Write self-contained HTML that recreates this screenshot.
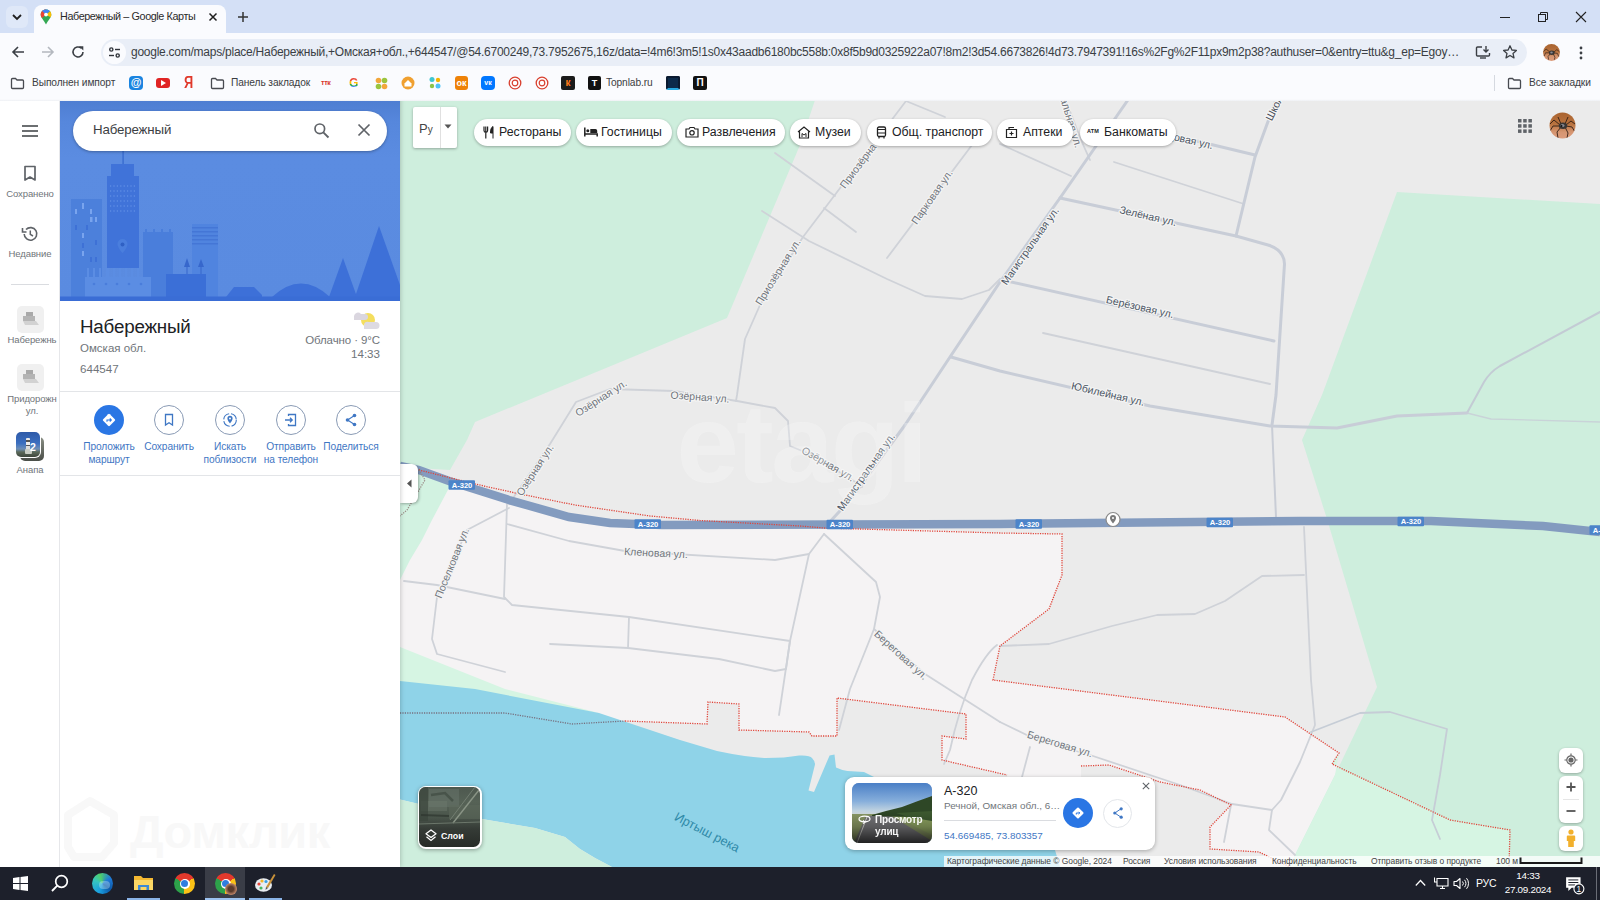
<!DOCTYPE html>
<html><head><meta charset="utf-8">
<style>
*{box-sizing:border-box;margin:0;padding:0}
html,body{width:1600px;height:900px;overflow:hidden;background:#fff;font-family:"Liberation Sans",sans-serif;}
body{position:relative}
.abs{position:absolute}
#tabstrip{left:0;top:0;width:1600px;height:34px;background:#d4e0f6}
#tab{left:34px;top:5px;width:192px;height:29px;background:#fafbfe;border-radius:8px 8px 0 0}
#toolbar{left:0;top:33px;width:1600px;height:37px;background:#fafbfe}
#urlbar{left:101px;top:39px;width:1426px;height:27px;border-radius:14px;background:#e9eef7}
#bmbar{left:0;top:70px;width:1600px;height:27px;background:#fafbfe}
#bmext{left:0;top:97px;width:1600px;height:3.500px;background:linear-gradient(180deg,#fafbfe 0 55%,#eef0f4 100%);z-index:9}
.t{position:absolute;white-space:nowrap;color:#3c4043}
#rail{left:0;top:97px;width:60px;height:770px;background:#fff;border-right:1px solid #e6e7ea}
#panel{left:60px;top:97px;width:340px;height:770px;background:#fff;box-shadow:0 0 5px rgba(0,0,0,.25);clip-path:inset(3px -10px 0 0)}
#hero{left:60px;top:97px;width:340px;height:203.500px;background:#5a8be0;overflow:hidden}
#search{left:73px;top:111px;width:314px;height:40px;border-radius:20px;background:#fff;box-shadow:0 1px 3px rgba(0,0,0,.3)}
#map{left:400px;top:97px;width:1200px;height:770px;overflow:hidden;background:#ebebeb}
#taskbar{left:0;top:867px;width:1600px;height:33px;background:#1d202b}
.chip{position:absolute;top:119px;height:27px;border-radius:14px;background:#fff;box-shadow:0 1px 3px rgba(0,0,0,.3);font-size:13px;color:#202124;line-height:27px;white-space:nowrap}
.ctl{position:absolute;background:#fff;border-radius:6px;box-shadow:0 1px 3px rgba(0,0,0,.3)}
</style></head><body>
<!-- CHROME -->
<div id="tabstrip" class="abs"></div>
<div id="tab" class="abs"></div>
<div id="toolbar" class="abs"></div>
<div id="urlbar" class="abs"></div>
<div id="bmbar" class="abs"></div>
<!--CHROME-ITEMS_S--><!-- tab search chevron -->
<div class="abs" style="left:6px;top:6px;width:22px;height:22px;border-radius:6px;background:#dfe8f8"></div>
<svg class="abs" style="left:11px;top:12px" width="12" height="10" viewBox="0 0 12 10"><path d="M2,3 L6,7 L10,3" fill="none" stroke="#1f1f1f" stroke-width="1.8"/></svg>
<!-- favicon maps pin -->
<svg class="abs" style="left:40px;top:9px" width="12" height="16" viewBox="0 0 12 16"><path d="M6,0.5 C2.8,0.5 0.7,2.9 0.7,5.7 C0.7,8.5 3.4,10.6 6,15.5 C8.6,10.6 11.3,8.5 11.3,5.7 C11.3,2.9 9.2,0.5 6,0.5 Z" fill="#34a853"/><path d="M6,0.5 C2.8,0.5 0.7,2.9 0.7,5.7 C0.7,6.9 1.2,8 2,9 L6,5.5 Z" fill="#ea4335"/><path d="M6,0.5 C7.6,0.5 9,1.1 10,2.2 L6,5.7 L2.2,2 C3.1,1 4.5,0.5 6,0.5Z" fill="#4285f4"/><path d="M10,2.2 C10.8,3.1 11.3,4.3 11.3,5.7 C11.3,6.6 11,7.4 10.6,8.2 L6,5.7Z" fill="#fbbc04"/><circle cx="6" cy="5.6" r="1.9" fill="#fff"/></svg>
<div class="t" style="left:60px;top:10px;font-size:10.8px;color:#2a2a2a;letter-spacing:-.4px">Набережный – Google Карты</div>
<svg class="abs" style="left:208px;top:12px" width="10" height="10" viewBox="0 0 10 10"><path d="M1.5,1.5 L8.5,8.5 M8.5,1.5 L1.5,8.5" stroke="#1f1f1f" stroke-width="1.5"/></svg>
<svg class="abs" style="left:237px;top:11px" width="12" height="12" viewBox="0 0 12 12"><path d="M6,1 V11 M1,6 H11" stroke="#333" stroke-width="1.5"/></svg>
<!-- window controls -->
<svg class="abs" style="left:1499px;top:11px" width="12" height="12" viewBox="0 0 12 12"><path d="M1,6.5 H11" stroke="#222" stroke-width="1"/></svg>
<svg class="abs" style="left:1537px;top:11px" width="12" height="12" viewBox="0 0 12 12"><rect x="1.5" y="3.5" width="7" height="7" fill="none" stroke="#222" stroke-width="1"/><path d="M3.5,3.5 V1.5 H10.5 V8.5 H8.5" fill="none" stroke="#222" stroke-width="1"/></svg>
<svg class="abs" style="left:1575px;top:11px" width="12" height="12" viewBox="0 0 12 12"><path d="M1,1 L11,11 M11,1 L1,11" stroke="#222" stroke-width="1.1"/></svg>
<!-- nav buttons -->
<svg class="abs" style="left:11px;top:45px" width="14" height="14" viewBox="0 0 14 14"><path d="M13,7 H2 M7,2 L2,7 L7,12" fill="none" stroke="#3b3f45" stroke-width="1.6"/></svg>
<svg class="abs" style="left:41px;top:45px" width="14" height="14" viewBox="0 0 14 14"><path d="M1,7 H12 M7,2 L12,7 L7,12" fill="none" stroke="#b4b8bf" stroke-width="1.6"/></svg>
<svg class="abs" style="left:71px;top:45px" width="14" height="14" viewBox="0 0 14 14"><path d="M12,7 A5,5 0 1 1 10.3,3.2" fill="none" stroke="#3b3f45" stroke-width="1.6"/><path d="M8,1.2 H12.3 V5.5 Z" fill="#3b3f45"/></svg>
<!-- site info -->
<div class="abs" style="left:103px;top:41px;width:23px;height:23px;border-radius:12px;background:#fafbfe"></div>
<svg class="abs" style="left:108px;top:46px" width="13" height="13" viewBox="0 0 13 13"><g fill="none" stroke="#30343a" stroke-width="1.4"><circle cx="3.3" cy="3.5" r="1.6"/><path d="M7,3.5 H12"/><circle cx="9.7" cy="9.5" r="1.6"/><path d="M1,9.5 H6"/></g></svg>
<div class="t" style="left:131px;top:45px;font-size:12px;color:#3a3e44;letter-spacing:-.25px" id="url">google.com/maps/place/Набережный,+Омская+обл.,+644547/@54.6700249,73.7952675,16z/data=!4m6!3m5!1s0x43aadb6180bc558b:0x8f5b9d0325922a07!8m2!3d54.6673826!4d73.7947391!16s%2Fg%2F11px9m2p38?authuser=0&amp;entry=ttu&amp;g_ep=Egoy…</div>
<!-- install / star -->
<svg class="abs" style="left:1475px;top:44px" width="16" height="16" viewBox="0 0 16 16"><path d="M7,3 H2.5 A1,1 0 0 0 1.5,4 V11 A1,1 0 0 0 2.5,12 H13.500 A1,1 0 0 0 14.5,11 V9" fill="none" stroke="#3b3f45" stroke-width="1.4"/><path d="M5,14 H11" stroke="#3b3f45" stroke-width="1.4"/><path d="M11,2 V8 M8.500,5.500 L11,8 L13.500,5.500" fill="none" stroke="#3b3f45" stroke-width="1.4"/></svg>
<svg class="abs" style="left:1502px;top:44px" width="16" height="16" viewBox="0 0 16 16"><path d="M8,1.8 L9.9,6 L14.400,6.400 L11,9.400 L12,13.900 L8,11.500 L4,13.900 L5,9.400 L1.600,6.400 L6.100,6 Z" fill="none" stroke="#3b3f45" stroke-width="1.3" stroke-linejoin="round"/></svg>
<!-- profile avatar -->
<svg class="abs" style="left:1543px;top:44px" width="17" height="17" viewBox="0 0 27 27"><defs><linearGradient id="avg2" x1="0" y1="0" x2="0" y2="1"><stop offset="0" stop-color="#a9632f"/><stop offset=".45" stop-color="#b9733f"/><stop offset=".75" stop-color="#d69672"/><stop offset="1" stop-color="#dc9c7c"/></linearGradient></defs><circle cx="13.500" cy="13.500" r="13.500" fill="url(#avg2)"/><g stroke="#2a1a12" stroke-width="1.300" fill="none" opacity=".8"><path d="M11,13 L5,8 L1,12"/><path d="M11,14 L4,14 L2,19"/><path d="M12,15 L8,20 L9,25"/><path d="M16,15 L19,21 L18,25"/><path d="M17,14 L23,15 L25,20"/><path d="M17,13 L22,9 L26,12"/></g><ellipse cx="14" cy="13.800" rx="4.500" ry="3.500" fill="#3a3634"/><ellipse cx="13.500" cy="13.500" rx="2" ry="1.500" fill="#8a8a92"/></svg>
<svg class="abs" style="left:1578px;top:45px" width="6" height="16" viewBox="0 0 6 16"><circle cx="3" cy="3" r="1.4" fill="#3b3f45"/><circle cx="3" cy="8" r="1.4" fill="#3b3f45"/><circle cx="3" cy="13" r="1.4" fill="#3b3f45"/></svg>
<!-- bookmarks -->
<svg class="abs" style="left:10px;top:77px" width="15" height="13" viewBox="0 0 15 13"><path d="M1.500,2.500 A1,1 0 0 1 2.500,1.500 H5.500 L7,3 H12.500 A1,1 0 0 1 13.500,4 V10.500 A1,1 0 0 1 12.500,11.500 H2.500 A1,1 0 0 1 1.500,10.500 Z" fill="none" stroke="#474a50" stroke-width="1.3"/></svg>
<div class="t" style="left:32px;top:77px;font-size:10.2px;color:#3a3d42;letter-spacing:-.1px">Выполнен импорт</div>
<div class="abs" style="left:129px;top:76px;width:14px;height:14px;border-radius:4px;background:#1a84e0;color:#fff;font-size:11px;line-height:13px;text-align:center;font-weight:bold">@</div>
<div class="abs" style="left:156px;top:78px;width:14px;height:10px;border-radius:3px;background:#e02424"></div>
<svg class="abs" style="left:161px;top:80px" width="5" height="6" viewBox="0 0 5 6"><path d="M0,0 L5,3 L0,6Z" fill="#fff"/></svg>
<div class="t" style="left:184px;top:74px;font-size:16px;color:#e0392b;font-weight:bold;transform:scaleX(.8);transform-origin:0 0">Я</div>
<svg class="abs" style="left:210px;top:77px" width="15" height="13" viewBox="0 0 15 13"><path d="M1.500,2.500 A1,1 0 0 1 2.500,1.500 H5.500 L7,3 H12.500 A1,1 0 0 1 13.500,4 V10.500 A1,1 0 0 1 12.500,11.500 H2.500 A1,1 0 0 1 1.500,10.500 Z" fill="none" stroke="#474a50" stroke-width="1.3"/></svg>
<div class="t" style="left:231px;top:77px;font-size:10.2px;color:#3a3d42;letter-spacing:-.1px">Панель закладок</div>
<div class="t" style="left:321px;top:79px;font-size:7px;color:#d9362b;font-weight:bold;letter-spacing:-.3px">ттк</div>
<div class="t" style="left:349px;top:76px;font-size:12px;font-weight:bold;background:linear-gradient(180deg,#ea4335 0 35%,#fbbc04 35% 55%,#34a853 55% 75%,#4285f4 75%);-webkit-background-clip:text;color:transparent">G</div>
<svg class="abs" style="left:375px;top:77px" width="13" height="13" viewBox="0 0 13 13"><circle cx="3.5" cy="3.5" r="2.8" fill="#f2a73b"/><circle cx="9.500" cy="3.500" r="2.8" fill="#9bc53d"/><circle cx="3.500" cy="9.500" r="2.8" fill="#9bc53d"/><circle cx="9.500" cy="9.500" r="2.8" fill="#f2a73b"/></svg>
<svg class="abs" style="left:401px;top:76px" width="14" height="14" viewBox="0 0 14 14"><circle cx="7" cy="7" r="6.5" fill="#f0a030"/><path d="M3.5,7.500 L7,4 L10.500,7.500 V10.500 H3.500Z" fill="#fff"/></svg>
<svg class="abs" style="left:428px;top:76px" width="14" height="14" viewBox="0 0 14 14"><circle cx="4" cy="3.500" r="2.500" fill="#3ec6d0"/><circle cx="10" cy="4" r="2.200" fill="#f4b400"/><circle cx="4" cy="10" r="2.200" fill="#8bc34a"/><circle cx="10" cy="10" r="2.500" fill="#4fc3f7"/></svg>
<div class="abs" style="left:455px;top:76px;width:13px;height:14px;border-radius:3px;background:#ee8208;color:#fff;font-size:9px;line-height:14px;text-align:center;font-weight:bold">ок</div>
<div class="abs" style="left:481px;top:76px;width:14px;height:14px;border-radius:4px;background:#0077ff;color:#fff;font-size:7px;line-height:14px;text-align:center;font-weight:bold">vк</div>
<svg class="abs" style="left:508px;top:76px" width="14" height="14" viewBox="0 0 14 14"><circle cx="7" cy="7" r="5.800" fill="#fff" stroke="#d8402f" stroke-width="1.300"/><circle cx="7" cy="7" r="2.800" fill="none" stroke="#d8402f" stroke-width="1.200"/></svg>
<svg class="abs" style="left:535px;top:76px" width="14" height="14" viewBox="0 0 14 14"><circle cx="7" cy="7" r="5.800" fill="#fff" stroke="#d8402f" stroke-width="1.300"/><circle cx="7" cy="7" r="2.800" fill="none" stroke="#d8402f" stroke-width="1.200"/></svg>
<div class="abs" style="left:561px;top:76px;width:14px;height:14px;border-radius:2px;background:#1b1b1b;color:#ff7a1a;font-size:10px;line-height:14px;text-align:center;font-weight:bold">к</div>
<div class="abs" style="left:588px;top:76px;width:13px;height:14px;border-radius:2px;background:#111;color:#fff;font-size:9px;line-height:14px;text-align:center;font-weight:bold">Т</div>
<div class="t" style="left:606px;top:77px;font-size:10.2px;color:#3a3d42;letter-spacing:-.1px">Topnlab.ru</div>
<div class="abs" style="left:666px;top:76px;width:14px;height:14px;border-radius:2px;background:#0c2a4a;border:2px solid #0a1a30;border-bottom-color:#27a9e1"></div>
<div class="abs" style="left:693px;top:76px;width:14px;height:14px;border-radius:2px;background:#111;color:#fff;font-size:10px;line-height:14px;text-align:center;font-weight:bold">П</div>
<div class="abs" style="left:1494px;top:75px;width:1px;height:16px;background:#d5d9e0"></div>
<svg class="abs" style="left:1507px;top:77px" width="15" height="13" viewBox="0 0 15 13"><path d="M1.500,2.500 A1,1 0 0 1 2.500,1.500 H5.500 L7,3 H12.500 A1,1 0 0 1 13.500,4 V10.500 A1,1 0 0 1 12.500,11.500 H2.500 A1,1 0 0 1 1.500,10.500 Z" fill="none" stroke="#474a50" stroke-width="1.300"/></svg>
<div class="t" style="left:1529px;top:77px;font-size:10.2px;color:#3a3d42;letter-spacing:-.1px">Все закладки</div>
<!--CHROME-ITEMS_E-->
<!-- MAP -->
<div id="map" class="abs">
<!--MAPSVG_S--><svg width="1200" height="770" viewBox="400 97 1200 770" style="position:absolute;left:0;top:0">
<rect x="400" y="97" width="1200" height="770" fill="#ebebeb"/>
<!-- selected (lighter) region -->
<path id="sel" d="M400,468 L419,470 L449,481 L509,499 L569,515 L610,520 L662,521 L830,526 L1000,533 L1062,534 L1062,575 L1049,609 L1000,646 L993,680 L1285,717 L1339,753 L1332,764 L1450,820 L1510,830 L1509,867 L400,867 Z" fill="#f5f3f4"/>
<!-- gray cutouts (outside selection, below) -->
<path d="M400,713 L505,713 L572,724 L625,721 L707,724 L708,702 L739,704 L739,730 L809,732 L812,736 L837,736 L837,698 L966,714 L966,739 L942,736 L942,760 L1007,775 L1010,800 L1081,800 L1081,766 L1109,765 L1160,782 L1200,790 L1231,805 L1210,827 L1210,849 L1259,852 L1290,867 L400,867 Z" fill="#ebebeb"/>
<!-- green areas -->
<path d="M400,97 L816,97 L800,145 L727,318 L577,380 L475,422 L467,440 L450,470 L400,467 Z" fill="#ceeedd"/>
<path d="M400,465 L447,478 L450,486 L432,520 L422,540 L410,560 L400,580 Z" fill="#d2f2e1"/>
<path d="M1397,192 L1600,204 L1600,867 L1290,867 L1295,855 L1335,775 L1377,687 L1327,519 L1302,440 L1322,395 Z" fill="#ceeedd"/>
<path d="M1339,753 L1332,764 L1450,820 L1510,830 L1509,867 L1290,867 L1295,855 L1335,775 Z" fill="#d6f5e3"/>
<path d="M400,647 L505,689 L599,713 L400,690 Z" fill="#d6f5e3"/>
<!-- water -->
<path d="M400,681 L475,689 L599,713 L662,734 L680,740 L717,751 Q745,757 766,758 Q785,758 799,755.5 Q810,755 812,758 Q815,761 815,764.5 L808.5,790.4 L814,792 L829.6,755.4 L834.5,754.6 L836,767.6 Q842,770.500 847.5,771 L864,772 L900,790 L1055,850 L1060,867 L612,867 L595,858 L580,849 L565,837 L535,828 L482,819 L400,799.5 Z" fill="#8fd3e8"/>
<path d="M400,799.5 L482,819 L535,828 L565,837 L580,849 L595,858 L612,867 L400,867 Z" fill="#ceeedd"/>
<!-- roads minor -->
<g fill="none" stroke="#cfd2d8" stroke-width="1.8" stroke-linecap="round" stroke-linejoin="round">
<path d="M906,101 L803,237 L760,305 L745,339 L737,395 L736,401"/>
<path d="M775,153 L835,196"/><path d="M824,208 L856,232"/>
<path d="M762,211 L809,241 L887,279 L925,296 L962,299 L989,290 L1000,279"/>
<path d="M972,145 L887,258"/>
<path d="M906,101 L945,117"/>
<path d="M1066,101 L1081,140 L1090,160"/>
<path d="M1000,144 L1071,176"/>
<path d="M1114,162 L1244,204"/>
<path d="M1043,333 L1270,384"/>
<path d="M1600,312 L1500,366 Q1490,372 1484,382 L1467,413" stroke="#c3cbd4" stroke-width="2"/>
<path d="M1467,413 L1491,419 L1600,422" stroke="#c9d3d8" stroke-width="1.300"/>
<path d="M1304,527 L1311,680 L1315,725 L1300,762 L1281,800 L1272,810 L1269,830 L1295,855"/>
<path d="M1304,575 L1262,576 L1225,601 L1195,614 L1157,615 L1112,626 L1049,644 L1000,646"/>
<path d="M1311,732 L1360,713 L1390,712 L1447,729 L1440,775 L1432,820 L1440,839" stroke="#c6cdd6"/>
<path d="M1000,722 L1037,740 L1090,755 L1180,785 L1232,804 L1272,810"/>
<path d="M1030,747 L1022,777"/><path d="M1231,805 L1224,842"/>
<path d="M509,504 L550,444 L576,402 L610,389 L674,391 L737,401 L775,408 L788,421 L790,446 L812,455 L854,481 L862,487"/>
<path d="M509,508 L467,530 L437,597 L432,639 L437,654 L505,672"/>
<path d="M507,504 L504,597 L512,605 L629,617 L790,641"/>
<path d="M507,524 L569,541 L625,551 L775,560 L809,554 L824,534"/>
<path d="M404,581 L437,585 L505,599"/>
<path d="M629,617 L628,648"/>
<path d="M550,644 L628,648 L719,659 L775,671 L786,669 L790,641 L809,554"/>
<path d="M824,534 L876,582 L880,597 L874,629 L850,689 L839,730"/>
<path d="M874,629 L925,674 L1000,722"/>
<path d="M790,641 L779,715"/>
<path d="M997,645 Q986,653 972,680 Q958,712 950,750 L944,764"/>
</g>
<!-- roads major -->
<g fill="none" stroke="#c8cdd7" stroke-width="3" stroke-linecap="round" stroke-linejoin="round">
<path d="M1130,97 L1060,198 L1000,282 L950,357 L905,425 L850,500 L826,526"/>
<path d="M1060,198 L1236,236 L1268,245 Q1284,250 1284.500,264 L1276,395 L1272,425"/>
<path d="M1277,97 L1255,157 L1236,236"/>
<path d="M1176,136 L1255,155"/>
<path d="M1007,281 L1274,341"/>
<path d="M951,357 L1000,371 L1150,406 L1270,426 L1337,428 L1397,416 L1467,413"/>
</g>
<g fill="none" stroke="#c9cdd6" stroke-width="2" stroke-linecap="round"><path d="M1272,425 L1276,517"/></g>
<!-- highway -->
<path d="M400,466 L419,470 L449,481 L509,500 L569,517 L610,523 L662,525 L1000,524 L1300,521 L1431,521 L1543,526 L1600,532" fill="none" stroke="#839bbf" stroke-width="8.5"/>
<!-- dotted boundary -->
<g fill="none" stroke="#e0453a" stroke-width="1.3" stroke-dasharray="1.2 1.2">
<path d="M400,466 L419,470 L475,484 L520,494 L575,505 L650,516 L700,520.5 L800,526 L824,528 L1000,533 L1062,534 L1062,575 L1049,609 L1000,646 L993,680 L1285,717 L1339,753 L1332,764 L1450,820 L1510,830 L1509,867"/>
<path d="M400,713 L505,713 L572,724 L625,721" stroke="#77707f"/><path d="M625,721 L707,724 L708,702 L739,704 L739,730 L809,732 L812,736 L837,736 L837,698 L966,714 L966,739 L942,736 L942,760 L1007,775"/>
<path d="M1081,766 L1109,765 L1160,782 L1200,790 L1231,805 L1210,827 L1210,849 L1259,852 L1290,867"/>
<path d="M419,470 L425,480 L407,510 L400,516" stroke="#9a8a86"/>
</g>
<!--LBL_S--><g font-family="Liberation Sans, sans-serif" font-size="10.5" text-anchor="middle" stroke-linejoin="round">
<text transform="translate(858,166) rotate(-53)" y="3.6" fill="#70757c" stroke="#f4f4f4" stroke-width="2.4" paint-order="stroke">Приозёрна</text>
<text transform="translate(778,272) rotate(-58)" y="3.6" fill="#70757c" stroke="#f4f4f4" stroke-width="2.4" paint-order="stroke">Приозёрная ул.</text>
<text transform="translate(932,197) rotate(-55)" y="3.6" fill="#70757c" stroke="#f4f4f4" stroke-width="2.4" paint-order="stroke">Парковая ул.</text>
<text transform="translate(1030,246) rotate(-55)" y="3.6" fill="#4e5866" stroke="#f4f4f4" stroke-width="2.4" paint-order="stroke">Магистральная ул.</text>
<text transform="translate(866,472) rotate(-55)" y="3.6" fill="#4e5866" stroke="#f4f4f4" stroke-width="2.4" paint-order="stroke">Магистральная ул.</text>
<text transform="translate(1068,112) rotate(73)" y="3.6" fill="#70757c" stroke="#f4f4f4" stroke-width="2.4" paint-order="stroke">Вокзальная ул.</text>
<text transform="translate(1268.5,120) rotate(-64)" text-anchor="start" y="3.6" fill="#444b55" stroke="#f4f4f4" stroke-width="2.4" paint-order="stroke">Школьная ул.</text>
<text transform="translate(1184,139) rotate(13)" y="3.6" fill="#4e5866" stroke="#f4f4f4" stroke-width="2.4" paint-order="stroke">Садовая ул.</text>
<text transform="translate(1148,216) rotate(13)" y="3.6" fill="#4e5866" stroke="#f4f4f4" stroke-width="2.4" paint-order="stroke">Зелёная ул.</text>
<text transform="translate(1140,307) rotate(13)" y="3.6" fill="#4e5866" stroke="#f4f4f4" stroke-width="2.4" paint-order="stroke">Берёзовая ул.</text>
<text transform="translate(1108,394) rotate(13)" y="3.6" fill="#4e5866" stroke="#f4f4f4" stroke-width="2.4" paint-order="stroke">Юбилейная ул.</text>
<text transform="translate(601,398) rotate(-33)" y="3.6" fill="#70757c" stroke="#f4f4f4" stroke-width="2.4" paint-order="stroke">Озёрная ул.</text>
<text transform="translate(700,397) rotate(4)" y="3.6" fill="#70757c" stroke="#f4f4f4" stroke-width="2.4" paint-order="stroke">Озёрная ул.</text>
<text transform="translate(828,464) rotate(30)" y="3.6" fill="#70757c" stroke="#f4f4f4" stroke-width="2.4" paint-order="stroke">Озёрная ул.</text>
<text transform="translate(535,470) rotate(-57)" y="3.6" fill="#70757c" stroke="#f4f4f4" stroke-width="2.4" paint-order="stroke">Озёрная ул.</text>
<text transform="translate(656,553) rotate(3)" y="3.6" fill="#70757c" stroke="#f4f4f4" stroke-width="2.4" paint-order="stroke">Кленовая ул.</text>
<text transform="translate(452,563) rotate(-68)" y="3.6" fill="#70757c" stroke="#f4f4f4" stroke-width="2.4" paint-order="stroke">Поселковая ул.</text>
<text transform="translate(901,655) rotate(42)" y="3.6" fill="#70757c" stroke="#f4f4f4" stroke-width="2.4" paint-order="stroke">Береговая ул.</text>
<text transform="translate(1060,744) rotate(17)" y="3.6" fill="#70757c" stroke="#f4f4f4" stroke-width="2.4" paint-order="stroke">Береговая ул.</text>
<text transform="translate(707,832.500) rotate(27.500)" y="4" font-size="12.700" fill="#2f8aa8">Иртыш река</text>
</g>
<g font-family="Liberation Sans, sans-serif" font-size="7.6" font-weight="bold" text-anchor="middle">
<rect x="448.5" y="480.3" width="26.5" height="9.4" rx="1" fill="#4c84c9"/><text x="462" y="487.9" fill="#fff">A-320</text>
<rect x="634.5" y="519.3" width="26.5" height="9.4" rx="1" fill="#4c84c9"/><text x="648" y="526.9" fill="#fff">A-320</text>
<rect x="826.5" y="519.8" width="26.5" height="9.4" rx="1" fill="#4c84c9"/><text x="840" y="527.4" fill="#fff">A-320</text>
<rect x="1015.5" y="519.3" width="26.5" height="9.4" rx="1" fill="#4c84c9"/><text x="1029" y="526.9" fill="#fff">A-320</text>
<rect x="1206.5" y="517.8" width="26.5" height="9.4" rx="1" fill="#4c84c9"/><text x="1220" y="525.4" fill="#fff">A-320</text>
<rect x="1397.5" y="516.8" width="26.5" height="9.4" rx="1" fill="#4c84c9"/><text x="1411" y="524.4" fill="#fff">A-320</text>
<rect x="1589.5" y="525.3" width="26.5" height="9.4" rx="1" fill="#4c84c9"/><text x="1603" y="532.9" fill="#fff">A-320</text>
</g>
<circle cx="1113" cy="519.5" r="7" fill="#fff" stroke="#8a8a8a" stroke-width="1.2"/><path d="M1113,515 a3,3 0 0 1 3,3 c0,2.300 -3,5.500 -3,5.500 c0,0 -3,-3.200 -3,-5.500 a3,3 0 0 1 3,-3z" fill="#7a7a7a"/><circle cx="1113" cy="518" r="1" fill="#fff"/>
<text x="801" y="482" font-family="Liberation Sans, sans-serif" font-weight="bold" font-size="112" text-anchor="middle" fill="#fff" opacity=".24" letter-spacing="-2.5">etagi</text><!--LBL_E-->
</svg>
<!--MAPSVG_E-->
</div>
<!--MAP-OVERLAYS_S--><!-- language switch -->
<div class="abs" style="left:413px;top:107px;width:44px;height:41px;background:#fff;border-radius:2px;box-shadow:0 1px 3px rgba(0,0,0,.3)"></div>
<div class="abs" style="left:440px;top:107px;width:1px;height:41px;background:#e0e0e0"></div>
<div class="t" style="left:419px;top:121px;font-size:13px;color:#444">Р<span style="font-size:10px">у</span></div>
<svg class="abs" style="left:444px;top:124px" width="8" height="5" viewBox="0 0 8 5"><path d="M0.500,0.500 H7.500 L4,4.500Z" fill="#555"/></svg>
<!-- chips -->
<div class="chip" style="left:474px;width:97px"><svg class="abs" style="left:9px;top:7px" width="12" height="13" viewBox="0 0 12 13"><path d="M1,0.500 V4.500 A1.800,1.800 0 0 0 4.600,4.500 V0.500 M2.800,0.500 V12.500" fill="none" stroke="#222" stroke-width="1.200"/><path d="M10,12.500 V0.500 C8,1.500 7.500,4 7.500,7 H10" fill="#222" stroke="#222" stroke-width="1"/></svg><span style="position:absolute;left:25px;font-size:12.300px">Рестораны</span></div>
<div class="chip" style="left:576px;width:96px"><svg class="abs" style="left:8px;top:8px" width="14" height="10" viewBox="0 0 14 10"><path d="M0.800,0.500 V9.500 M0.800,7 H13.200 V9.500" fill="none" stroke="#222" stroke-width="1.500"/><circle cx="3.800" cy="3.800" r="1.500" fill="#222"/><path d="M6.300,2 H11.500 A1.700,1.700 0 0 1 13.200,3.700 V6 H6.300Z" fill="#222"/></svg><span style="position:absolute;left:25px;font-size:12.300px">Гостиницы</span></div>
<div class="chip" style="left:677px;width:108px"><svg class="abs" style="left:8px;top:7px" width="14" height="12" viewBox="0 0 14 12"><path d="M1,3 H4 L5,1.500 H9 L10,3 H13 V11 H1Z" fill="none" stroke="#222" stroke-width="1.200"/><circle cx="7" cy="6.800" r="2.200" fill="none" stroke="#222" stroke-width="1.200"/></svg><span style="position:absolute;left:25px;font-size:12.300px">Развлечения</span></div>
<div class="chip" style="left:790px;width:71px"><svg class="abs" style="left:7px;top:7px" width="14" height="13" viewBox="0 0 14 13"><path d="M1,6 L7,1 L13,6 M2.500,5.500 V12 H11.500 V5.500" fill="none" stroke="#222" stroke-width="1.200"/><path d="M5,11 V7.500 L7,9 L9,7.500 V11" fill="none" stroke="#222" stroke-width="1"/></svg><span style="position:absolute;left:25px;font-size:12.300px">Музеи</span></div>
<div class="chip" style="left:867px;width:125px"><svg class="abs" style="left:9px;top:7px" width="11" height="13" viewBox="0 0 11 13"><rect x="1.500" y="1" width="8" height="9.500" rx="1.500" fill="none" stroke="#222" stroke-width="1.300"/><path d="M1.500,3.500 H9.500 M1.500,7 H9.500 M3,10.500 V12.500 M8,10.500 V12.500" stroke="#222" stroke-width="1.200"/></svg><span style="position:absolute;left:25px;font-size:12.300px">Общ. транспорт</span></div>
<div class="chip" style="left:997px;width:76px"><svg class="abs" style="left:8px;top:7px" width="13" height="13" viewBox="0 0 13 13"><path d="M1.500,3.500 H11.500 V11.500 H1.500Z M4,3.500 V1.500 H9" fill="none" stroke="#222" stroke-width="1.200"/><path d="M6.500,5.500 V9.500 M4.500,7.500 H8.500" stroke="#222" stroke-width="1.200"/></svg><span style="position:absolute;left:26px;font-size:12.300px">Аптеки</span></div>
<div class="chip" style="left:1080px;width:96px"><span style="position:absolute;left:7px;top:-1px;font-size:5.500px;font-weight:bold;letter-spacing:.2px">ATM</span><span style="position:absolute;left:24px;font-size:12.300px">Банкоматы</span></div>
<!-- apps grid + avatar -->
<svg class="abs" style="left:1518px;top:119px" width="14" height="14" viewBox="0 0 14 14"><g fill="#5f6368"><rect x="0" y="0" width="3.500" height="3.500"/><rect x="5.200" y="0" width="3.500" height="3.500"/><rect x="10.400" y="0" width="3.500" height="3.500"/><rect x="0" y="5.200" width="3.500" height="3.500"/><rect x="5.200" y="5.200" width="3.500" height="3.500"/><rect x="10.400" y="5.200" width="3.500" height="3.500"/><rect x="0" y="10.400" width="3.500" height="3.500"/><rect x="5.200" y="10.400" width="3.500" height="3.500"/><rect x="10.400" y="10.400" width="3.500" height="3.500"/></g></svg>
<svg class="abs" style="left:1549px;top:112px" width="27" height="27" viewBox="0 0 27 27"><defs><linearGradient id="avg" x1="0" y1="0" x2="0" y2="1"><stop offset="0" stop-color="#a9632f"/><stop offset=".45" stop-color="#b9733f"/><stop offset=".75" stop-color="#d69672"/><stop offset="1" stop-color="#dc9c7c"/></linearGradient><clipPath id="avc"><circle cx="13.5" cy="13.5" r="13"/></clipPath></defs><g clip-path="url(#avc)"><rect width="27" height="27" fill="url(#avg)"/><g stroke="#2a1a12" stroke-width="1" fill="none" opacity=".85"><path d="M11,13 L5,8 L1,12"/><path d="M11,14 L4,14 L1,19"/><path d="M12,15 L8,20 L9,26"/><path d="M16,15 L19,21 L18,26"/><path d="M17,14 L23,15 L26,20"/><path d="M17,13 L22,9 L26,12"/><path d="M12,12 L9,5"/><path d="M16,12 L19,5"/></g><ellipse cx="14" cy="13.800" rx="4.200" ry="3.200" fill="#3a3634"/><ellipse cx="13.500" cy="13.500" rx="2" ry="1.500" fill="#8a8a92"/><circle cx="12.500" cy="14" r="1" fill="#111"/></g></svg>
<!-- collapse toggle -->
<div class="abs" style="left:400px;top:464px;width:18px;height:39px;background:#fff;border-radius:0 6px 6px 0;box-shadow:1px 1px 3px rgba(0,0,0,.3)"></div>
<svg class="abs" style="left:406px;top:479px" width="6" height="9" viewBox="0 0 6 9"><path d="M5.500,0.500 V8.500 L1,4.500Z" fill="#555"/></svg>
<!-- layers -->
<div class="abs" style="left:417.5px;top:785.5px;width:64px;height:63px;border-radius:8px;background:#fff;box-shadow:0 1px 4px rgba(0,0,0,.35)"></div>
<div class="abs" style="left:419px;top:787px;width:61px;height:60px;border-radius:6.5px;background:linear-gradient(180deg,#4d584f 0%,#566256 25%,#4a554b 50%,#353b36 70%,#272b27 100%);overflow:hidden">
<svg width="61" height="60" viewBox="0 0 61 60" style="position:absolute;left:0;top:0"><rect x="10" y="2" width="30" height="18" fill="#66736a" opacity=".55"/><rect x="2" y="14" width="26" height="10" fill="#707d70" opacity=".4"/><rect x="0" y="0" width="9" height="34" fill="#3a443c" opacity=".7"/><rect x="30" y="18" width="31" height="14" fill="#5e6a5c" opacity=".5"/><path d="M60,3 L34,36" stroke="#8a9486" stroke-width="1.400"/><path d="M56,0 L31,33" stroke="#7a8578" stroke-width=".8"/><path d="M0,37 L61,35" stroke="#6b766a" stroke-width="1.200"/><path d="M2,28 L30,29" stroke="#2e362f" stroke-width="2" opacity=".7"/><path d="M12,8 L26,6 L34,14" stroke="#3a463c" stroke-width="2.500" fill="none" opacity=".6"/></svg></div>
<svg class="abs" style="left:425px;top:829px" width="12" height="13" viewBox="0 0 12 13"><path d="M6,1 L11,4.800 L6,8.600 L1,4.800Z" fill="none" stroke="#fff" stroke-width="1.300" stroke-linejoin="round"/><path d="M1.500,7.800 L6,11.400 L10.500,7.800" fill="none" stroke="#fff" stroke-width="1.300"/></svg>
<div class="t" style="left:441px;top:830.5px;font-size:8.8px;color:#fff;font-weight:bold">Слои</div>
<!-- bottom card -->
<div class="abs" style="left:845px;top:777px;width:310px;height:73px;border-radius:9px;background:#fff;box-shadow:0 1px 4px rgba(0,0,0,.3)"></div>
<div class="abs" style="left:852px;top:783px;width:80px;height:60px;border-radius:7px;overflow:hidden;background:#6a8fc8">
<svg width="80" height="60" viewBox="0 0 80 60" style="position:absolute;left:0;top:0"><defs><linearGradient id="svsky" x1="0" y1="0" x2="0" y2="1"><stop offset="0" stop-color="#4a7fc6"/><stop offset=".55" stop-color="#86aedb"/><stop offset="1" stop-color="#dfe6e2"/></linearGradient><linearGradient id="svdk" x1="0" y1="0" x2="0" y2="1"><stop offset="0" stop-color="#000" stop-opacity="0"/><stop offset=".5" stop-color="#000" stop-opacity=".25"/><stop offset="1" stop-color="#000" stop-opacity=".72"/></linearGradient></defs>
<rect width="80" height="33" fill="url(#svsky)"/>
<rect y="31" width="80" height="29" fill="#8b9a66"/>
<path d="M14,33 L38,32 L80,58 V60 H2Z" fill="#77777a"/>
<path d="M40,32 L80,32 V52 Z" fill="#8fa562"/>
<path d="M20,32 L34,28 L50,24 L66,18 L80,13 V36 L60,34 L20,33Z" fill="#2e4726"/>
<path d="M44,30 L80,28 V38 L56,34Z" fill="#3d5a30"/>
<path d="M15,34 L5,60" stroke="#e8e8e0" stroke-width=".9"/>
<rect y="28" width="80" height="32" fill="url(#svdk)"/></svg></div>
<svg class="abs" style="left:857.5px;top:814.5px" width="13" height="10" viewBox="0 0 13 10"><ellipse cx="6.500" cy="4" rx="5.500" ry="2.800" fill="none" stroke="#fff" stroke-width="1.200"/><path d="M5,5.500 L7,7 L5,8.500" fill="none" stroke="#fff" stroke-width="1.200"/></svg>
<div class="t" style="left:875px;top:813.5px;font-size:10px;line-height:12.5px;color:#fff;font-weight:bold;letter-spacing:-.2px;opacity:.95">Просмотр<br>улиц</div>
<div class="t" style="left:944px;top:784px;font-size:12.500px;color:#202124">A-320</div>
<div class="t" style="left:944px;top:800px;font-size:9.9px;color:#70757a">Речной, Омская обл., 6…</div>
<div class="abs" style="left:944px;top:820px;width:112px;height:1px;background:#dadce0"></div>
<div class="t" style="left:944px;top:830px;font-size:9.9px;color:#3f77c4">54.669485, 73.803357</div>
<div class="abs" style="left:1063px;top:798px;width:30px;height:30px;border-radius:15px;background:#2a76e4"></div>
<svg class="abs" style="left:1071px;top:806px" width="14" height="14" viewBox="0 0 14 14"><rect x="2.800" y="2.800" width="8.400" height="8.400" rx="1" transform="rotate(45 7 7)" fill="#fff"/><path d="M5.300,8.500 V7 H8.500 M7.600,5.800 L8.800,7 L7.600,8.200" fill="none" stroke="#2a76e4" stroke-width="1"/></svg>
<div class="abs" style="left:1103px;top:799px;width:29px;height:29px;border-radius:15px;background:#fff;border:1px solid #e3e6ea"></div>
<svg class="abs" style="left:1111px;top:806px" width="14" height="14" viewBox="0 0 14 14"><path d="M10,2.800 L3.800,7 L10,11.200" fill="none" stroke="#3f77c4" stroke-width="1"/><circle cx="10.200" cy="2.800" r="1.600" fill="#3f77c4"/><circle cx="3.800" cy="7" r="1.600" fill="#3f77c4"/><circle cx="10.200" cy="11.200" r="1.600" fill="#3f77c4"/></svg>
<svg class="abs" style="left:1142px;top:782px" width="8" height="8" viewBox="0 0 8 8"><path d="M0.800,0.800 L7.200,7.200 M7.200,0.800 L0.800,7.200" stroke="#5f6368" stroke-width="1.100"/></svg>
<!-- attribution -->
<div class="abs" style="left:944px;top:856px;width:656px;height:11px;background:rgba(255,255,255,.75)"></div>
<div class="t attr" style="left:947px">Картографические данные © Google, 2024</div>
<div class="t attr" style="left:1123px">Россия</div>
<div class="t attr" style="left:1164px">Условия использования</div>
<div class="t attr" style="left:1272px">Конфиденциальность</div>
<div class="t attr" style="left:1371px">Отправить отзыв о продукте</div>
<div class="t attr" style="left:1496px">100 м</div>
<svg class="abs" style="left:1519px;top:856px" width="64" height="9" viewBox="0 0 64 9"><path d="M1.500,1.500 V7 H62.500 V1.500" fill="none" stroke="#1a1a1a" stroke-width="2"/></svg>
<style>.attr{top:856px;font-size:8.45px;color:#444;line-height:11px;letter-spacing:-.05px}</style>
<!-- right controls -->
<div class="ctl" style="left:1559px;top:748px;width:24px;height:25px"></div>
<svg class="abs" style="left:1564px;top:753px" width="14" height="14" viewBox="0 0 14 14"><circle cx="7" cy="7" r="4.200" fill="none" stroke="#666" stroke-width="1.200"/><circle cx="7" cy="7" r="2.600" fill="#666"/><path d="M7,0.500 V2.800 M7,11.200 V13.500 M0.500,7 H2.800 M11.200,7 H13.500" stroke="#666" stroke-width="1.200"/></svg>
<div class="ctl" style="left:1559px;top:776px;width:24px;height:47px"></div>
<div class="abs" style="left:1563px;top:799px;width:16px;height:1px;background:#e6e6e6"></div>
<svg class="abs" style="left:1566px;top:782px" width="10" height="10" viewBox="0 0 10 10"><path d="M5,0.500 V9.500 M0.500,5 H9.500" stroke="#555" stroke-width="1.800"/></svg>
<svg class="abs" style="left:1566px;top:806px" width="10" height="10" viewBox="0 0 10 10"><path d="M0.500,5 H9.500" stroke="#555" stroke-width="1.800"/></svg>
<div class="ctl" style="left:1559px;top:826px;width:24px;height:25px"></div>
<svg class="abs" style="left:1566px;top:829px" width="10" height="19" viewBox="0 0 10 19"><circle cx="5" cy="3" r="2.600" fill="#f2b02c"/><path d="M1.800,6.500 H8.200 A1,1 0 0 1 9.200,7.500 V12 H7.800 V18 H2.200 V12 H0.800 V7.500 A1,1 0 0 1 1.800,6.500Z" fill="#f2b02c"/></svg>
<!--MAP-OVERLAYS_E-->
<!-- PANEL -->
<div id="panel" class="abs"></div>
<div id="hero" class="abs"><!--HERO_S--><svg width="340" height="204" viewBox="60 97 340 204" style="position:absolute;left:0;top:0">
<defs><linearGradient id="sky" x1="0" y1="0" x2="0" y2="1"><stop offset="0" stop-color="#4d7cd0"/><stop offset=".12" stop-color="#5687dc"/><stop offset=".3" stop-color="#5b8ce1"/><stop offset="1" stop-color="#5a8be0"/></linearGradient></defs>
<rect x="60" y="97" width="340" height="204" fill="url(#sky)"/>
<!-- left building -->
<rect x="71" y="199" width="31" height="98" fill="#4c80db"/>
<g fill="#79a4ee"><rect x="75" y="209" width="2" height="5"/><rect x="82" y="203" width="2" height="6"/><rect x="90" y="209" width="2" height="5"/><rect x="90" y="217" width="2.500" height="5"/><rect x="95" y="217" width="2" height="5"/><rect x="82" y="233" width="2" height="5"/><rect x="82" y="251" width="2" height="5"/></g>
<g fill="#3e71d6"><rect x="75" y="225" width="2" height="5"/><rect x="86" y="225" width="2" height="5"/><rect x="95" y="240" width="2" height="5"/><rect x="82" y="243" width="2" height="5"/><rect x="90" y="257" width="2" height="5"/><rect x="95" y="257" width="2" height="5"/></g>
<!-- castle mid -->
<path d="M143,232 h2 v-3 h2 v3 h6 v-3 h2 v3 h6 v-3 h2 v3 h6 v-3 h2 v3 h2 v65 h-30z" fill="#4a7edb"/>
<!-- striped building -->
<rect x="192" y="224" width="26" height="73" fill="#5084df"/>
<g fill="#4476d6"><rect x="192" y="227" width="26" height="1.500"/><rect x="192" y="231" width="26" height="1.500"/><rect x="192" y="235" width="26" height="1.500"/><rect x="192" y="239" width="26" height="1.500"/><rect x="192" y="243" width="26" height="1.500"/></g>
<!-- tall tower -->
<rect x="122.300" y="151" width="1.600" height="14" fill="#3c6fd2"/>
<rect x="111" y="164" width="23" height="14" fill="#4073d9"/>
<rect x="107" y="176" width="32" height="92" fill="#4073d9"/>
<g fill="#6b98ea"><path d="M110,186 h26 M110,191 h26 M110,196 h26 M110,201 h26 M110,206 h26 M110,211 h26" stroke="#6b98ea" stroke-width="1.200" stroke-dasharray="1.200 2.200" fill="none"/></g>
<path d="M122.500,239 a5,5 0 0 1 5,5 c0,4 -5,9 -5,9 c0,0 -5,-5 -5,-9 a5,5 0 0 1 5,-5z" fill="#4a7edd"/><circle cx="122.500" cy="244.500" r="2" fill="#2f60c4"/>
<!-- castle wall light -->
<path d="M85,277 h2 v-9 h2 v9 h4 v-9 h2 v9 h4 v-9 h2 v9 h5 v-9 h3 v9 h4 v-9 h2 v9 h4 v-9 h2 v9 h4 v-9 h2 v9 h4 v-9 h2 v9 h4 v-9 h2 v9 h12 v20 h-66z" fill="#5b8de3"/>
<g fill="#4a7ddb"><circle cx="94" cy="284" r="1.300"/><circle cx="106" cy="284" r="1.300"/><circle cx="117" cy="284" r="1.300"/><circle cx="129" cy="284" r="1.300"/><circle cx="141" cy="284" r="1.300"/></g>
<!-- low dark building -->
<rect x="166" y="274" width="40" height="23" fill="#3b6fd7"/>
<path d="M187,258 l3,9 h-6z M201,259 l3,8 h-6z" fill="#3767cc"/><rect x="186.500" y="266" width="1" height="8" fill="#3767cc"/><rect x="200.500" y="266" width="1" height="8" fill="#3767cc"/>
<!-- car -->
<path d="M226,297 l8,-10 h20 l8,8 v2z" fill="#3d70d8"/>
<!-- hill -->
<path d="M272,297 q29,-27 58,0z" fill="#3d70d8"/>
<!-- mountains -->
<path d="M329,297 L343,258 L357,297Z" fill="#3d70d8"/>
<path d="M355,297 L379,226 L400,285 V297Z" fill="#3d70d8"/>
<rect x="60" y="296.500" width="340" height="4.500" fill="#3a6dd5"/>
</svg>
<!--HERO_E--></div>
<div id="search" class="abs"></div>
<!--PANEL-ITEMS_S--><div class="t" style="left:93px;top:122px;font-size:13.3px;color:#3c4043;letter-spacing:-.15px">Набережный</div>
<svg class="abs" style="left:313px;top:122px" width="17" height="17" viewBox="0 0 17 17"><circle cx="6.800" cy="6.800" r="4.800" fill="none" stroke="#5f6368" stroke-width="1.700"/><path d="M10.300,10.300 L15.500,15.500" stroke="#5f6368" stroke-width="1.900"/></svg>
<svg class="abs" style="left:357px;top:123px" width="14" height="14" viewBox="0 0 14 14"><path d="M1.500,1.500 L12.500,12.500 M12.500,1.500 L1.500,12.500" stroke="#5f6368" stroke-width="1.700"/></svg>
<div class="t" style="left:80px;top:315.5px;font-size:18.8px;color:#202124;letter-spacing:-.2px">Набережный</div>
<div class="t" style="left:80px;top:341.5px;font-size:11.5px;color:#70757a">Омская обл.</div>
<div class="t" style="left:80px;top:361.5px;font-size:11.6px;color:#70757a">644547</div>
<!-- weather icon -->
<svg class="abs" style="left:352px;top:310px" width="28" height="22" viewBox="0 0 28 22"><circle cx="16" cy="10" r="7" fill="#f4de5e"/><path d="M2,10 H13 A3,3 0 0 0 13,4 H9 A4,4 0 0 0 2,6 Z" fill="#dad6df"/><path d="M12,19 H24 A3.500,3.500 0 0 0 24,12 H17 A4,4 0 0 0 12,14 Z" fill="#dddae2"/></svg>
<div class="t" style="right:1220px;top:333.5px;font-size:11.5px;color:#70757a;letter-spacing:-.1px">Облачно · 9°C</div>
<div class="t" style="right:1220px;top:347px;font-size:11.6px;color:#70757a">14:33</div>
<div class="abs" style="left:60px;top:391px;width:340px;height:1px;background:#e3e5e8"></div>
<div class="abs" style="left:60px;top:475px;width:340px;height:1px;background:#e3e5e8"></div>
<!-- action buttons -->
<div class="abs" style="left:94px;top:405px;width:30px;height:30px;border-radius:15px;background:#2a76e4"></div>
<svg class="abs" style="left:101px;top:412px" width="16" height="16" viewBox="0 0 16 16"><rect x="3.300" y="3.300" width="9.400" height="9.400" rx="1.200" transform="rotate(45 8 8)" fill="#fff"/><path d="M6,9.800 V8 H10 M8.800,6.500 L10.300,8 L8.800,9.500" fill="none" stroke="#2a76e4" stroke-width="1.100"/></svg>
<div class="abs abtn" style="left:154px"></div>
<div class="abs abtn" style="left:215px"></div>
<div class="abs abtn" style="left:276px"></div>
<div class="abs abtn" style="left:336px"></div>
<style>.abtn{top:405px;width:30px;height:30px;border-radius:15px;border:1px solid #8a9bb5;background:#fff}
.albl{position:absolute;width:70px;text-align:center;font-size:10.2px;line-height:13.3px;color:#3f77c4;top:440px;letter-spacing:-.1px}</style>
<svg class="abs" style="left:163px;top:413px" width="12" height="14" viewBox="0 0 12 14"><path d="M2.500,1.500 H9.500 V12 L6,9.800 L2.500,12 Z" fill="none" stroke="#3f77c4" stroke-width="1.300"/></svg>
<svg class="abs" style="left:222px;top:412px" width="16" height="16" viewBox="0 0 16 16"><circle cx="8" cy="8" r="6.300" fill="none" stroke="#3f77c4" stroke-width="1.100" stroke-dasharray="8 2"/><path d="M8,3.800 A2.600,2.600 0 0 0 5.400,6.400 C5.400,8.300 8,11.300 8,11.300 C8,11.300 10.600,8.300 10.600,6.400 A2.600,2.600 0 0 0 8,3.800Z" fill="#3f77c4"/><circle cx="8" cy="6.400" r="1" fill="#fff"/></svg>
<svg class="abs" style="left:283px;top:412px" width="16" height="16" viewBox="0 0 16 16"><path d="M5.500,4 V2.500 H12.500 V13.500 H5.500 V12" fill="none" stroke="#3f77c4" stroke-width="1.300"/><path d="M2,8 H9 M7,5.800 L9.200,8 L7,10.200" fill="none" stroke="#3f77c4" stroke-width="1.300"/></svg>
<svg class="abs" style="left:343px;top:412px" width="16" height="16" viewBox="0 0 16 16"><path d="M11.500,3.500 L4.500,8 L11.500,12.500" fill="none" stroke="#3f77c4" stroke-width="1.100"/><circle cx="11.500" cy="3.500" r="1.800" fill="#3f77c4"/><circle cx="4.500" cy="8" r="1.800" fill="#3f77c4"/><circle cx="11.500" cy="12.500" r="1.800" fill="#3f77c4"/></svg>
<div class="albl" style="left:74px">Проложить<br>маршрут</div>
<div class="albl" style="left:134px">Сохранить</div>
<div class="albl" style="left:195px">Искать<br>поблизости</div>
<div class="albl" style="left:256px">Отправить<br>на телефон</div>
<div class="albl" style="left:316px">Поделиться</div>
<!-- Domclick watermark -->
<svg class="abs" style="left:62px;top:795px" width="290" height="70" viewBox="0 0 290 70"><path d="M28,6 L52,20 V48 L40,62 H12 L6,52 V20 Z" fill="none" stroke="#f8f8f8" stroke-width="8" stroke-linejoin="round"/><text x="68" y="53" font-family="Liberation Sans, sans-serif" font-weight="bold" font-size="47" fill="#f8f8f8" letter-spacing="-.5">Домклик</text></svg>
<!--PANEL-ITEMS_E-->
<div id="rail" class="abs"></div>
<!--RAIL-ITEMS_S--><svg class="abs" style="left:22px;top:125px" width="16" height="12" viewBox="0 0 16 12"><path d="M0,1 H16 M0,6 H16 M0,11 H16" stroke="#3c4043" stroke-width="1.600"/></svg>
<svg class="abs" style="left:23px;top:165px" width="14" height="17" viewBox="0 0 14 17"><path d="M2,1.500 H12 V15 L7,12 L2,15 Z" fill="none" stroke="#5f6368" stroke-width="1.700" stroke-linejoin="round"/></svg>
<div class="rlbl" style="top:188px">Сохранено</div>
<svg class="abs" style="left:21px;top:225px" width="18" height="18" viewBox="0 0 18 18"><path d="M3.200,9 A6.300,6.300 0 1 0 5,4.500" fill="none" stroke="#5f6368" stroke-width="1.600"/><path d="M1.500,3 V7 H5.500" fill="none" stroke="#5f6368" stroke-width="1.600"/><path d="M9.300,5.500 V9.300 L12,11" fill="none" stroke="#5f6368" stroke-width="1.500"/></svg>
<div class="rlbl" style="top:248px">Недавние</div>
<div class="abs" style="left:11px;top:284px;width:38px;height:1px;background:#dadce0"></div>
<div class="abs" style="left:17px;top:306px;width:27px;height:27px;border-radius:5px;background:#f0f0f0"></div>
<svg class="abs" style="left:22px;top:311px" width="20" height="16" viewBox="0 0 20 16"><rect x="4" y="1" width="7" height="8" fill="#a9a9a9"/><rect x="1" y="5" width="12" height="5" fill="#b4b4b4"/><path d="M1,10 H14 L17,14 H3Z" fill="#d2d2d2"/></svg>
<div class="rlbl" style="top:334px;width:56px;left:4px;overflow:hidden">Набережнь</div>
<div class="abs" style="left:17px;top:364px;width:27px;height:27px;border-radius:5px;background:#f0f0f0"></div>
<svg class="abs" style="left:22px;top:369px" width="20" height="16" viewBox="0 0 20 16"><rect x="4" y="1" width="7" height="8" fill="#a9a9a9"/><rect x="1" y="5" width="12" height="5" fill="#b4b4b4"/><path d="M1,10 H14 L17,14 H3Z" fill="#d2d2d2"/></svg>
<div class="rlbl" style="top:393px;width:56px;left:4px;overflow:hidden;line-height:12px">Придорожн<br>ул.</div>
<div class="abs" style="left:20px;top:437px;width:24px;height:24px;border-radius:5px;background:linear-gradient(180deg,#8a8f84,#4a4e48)"></div>
<div class="abs" style="left:15px;top:431px;width:25.500px;height:26.500px;border-radius:6px;background:#fff"></div>
<div class="abs" style="left:16px;top:432px;width:23.500px;height:24.500px;border-radius:5px;background:linear-gradient(180deg,#2e5aa8 0%,#3b6fc0 45%,#6e8fb8 68%,#5c6a5a 80%,#3e463c 100%);overflow:hidden"><span style="position:absolute;left:10px;top:6px;width:3.500px;height:13px;background:linear-gradient(180deg,#e8e8e8 0 18%,#555 18% 30%,#eee 30% 50%,#555 50% 62%,#ddd 62%);border-radius:1px"></span><span style="position:absolute;left:8.500px;top:17px;width:7px;height:5px;background:#c9cdc4;border-radius:1px"></span><span style="position:absolute;left:14px;top:9px;font-size:10.500px;font-weight:bold;color:#fff;font-family:'Liberation Sans',sans-serif">2</span></div>
<div class="rlbl" style="top:464px">Анапа</div>
<style>.rlbl{position:absolute;left:0;width:60px;text-align:center;font-size:9.500px;color:#70757a;white-space:nowrap;letter-spacing:-.1px}</style>
<!--RAIL-ITEMS_E-->
<div id="bmext" class="abs"></div>
<!-- TASKBAR -->
<div id="taskbar" class="abs"></div>
<!--TASKBAR-ITEMS_S--><!-- windows logo -->
<svg class="abs" style="left:12.5px;top:876px" width="15" height="15" viewBox="0 0 15 15"><path d="M0,2 L6.500,1 V7 H0Z M7.500,0.900 L15,0 V7 H7.500Z M0,8 H6.500 V14 L0,13Z M7.500,8 H15 V15 L7.500,14.100Z" fill="#fff"/></svg>
<svg class="abs" style="left:51px;top:874px" width="18" height="18" viewBox="0 0 18 18"><circle cx="10.500" cy="7.500" r="5.800" fill="none" stroke="#fff" stroke-width="1.700"/><path d="M6.300,11.700 L1,17" stroke="#fff" stroke-width="1.900"/></svg>
<!-- edge -->
<div class="abs" style="left:92px;top:873px;width:21px;height:21px;border-radius:11px;background:conic-gradient(from 200deg,#1a9fe0,#36c6c0 25%,#4fd06a 40%,#1f7ad8 60%,#0c59a8 80%,#1a9fe0)"></div>
<div class="abs" style="left:98px;top:880px;width:12px;height:9px;border-radius:6px 6px 8px 2px;background:#1d202b;opacity:.0"></div>
<div class="abs" style="left:99px;top:881px;width:11px;height:8px;border-radius:5px;background:#d8f3fa;opacity:.35"></div>
<!-- explorer -->
<svg class="abs" style="left:133px;top:874px" width="21" height="18" viewBox="0 0 21 18"><path d="M1,2 H8 L10,4 H20 V16 H1Z" fill="#f5b932"/><path d="M1,6 H20 V16 H1Z" fill="#fbd765"/><path d="M5,11 H16 V16 H5Z" fill="#3d8ad6"/><path d="M7.500,13 H13.500 V16 H7.500Z" fill="#fbd765"/></svg>
<!-- chrome -->
<div class="abs" style="left:174px;top:873px;width:21px;height:21px;border-radius:11px;background:conic-gradient(from 60deg,#fbc116 0 120deg,#2da24a 120deg 240deg,#e3392c 240deg 360deg)"></div>
<div class="abs" style="left:179.500px;top:878.500px;width:10px;height:10px;border-radius:5px;background:#fff"></div>
<div class="abs" style="left:181px;top:880px;width:7px;height:7px;border-radius:4px;background:#2f7de0"></div>
<!-- chrome active -->
<div class="abs" style="left:205px;top:867px;width:40px;height:33px;background:#3a3d47"></div>
<div class="abs" style="left:215px;top:873px;width:21px;height:21px;border-radius:11px;background:conic-gradient(from 60deg,#fbc116 0 120deg,#2da24a 120deg 240deg,#e3392c 240deg 360deg)"></div>
<div class="abs" style="left:220.500px;top:878.500px;width:10px;height:10px;border-radius:5px;background:#fff"></div>
<div class="abs" style="left:222px;top:880px;width:7px;height:7px;border-radius:4px;background:#2f7de0"></div>
<div class="abs" style="left:225px;top:883px;width:12px;height:12px;border-radius:6px;background:radial-gradient(circle,#5a3a2c 0 30%,#c48a6c 70%)"></div>
<!-- paint -->
<svg class="abs" style="left:254px;top:872px" width="22" height="22" viewBox="0 0 22 22"><ellipse cx="9.500" cy="13" rx="8.500" ry="6.800" fill="#e8edf2"/><circle cx="5" cy="12" r="1.600" fill="#e8483a"/><circle cx="8" cy="9" r="1.600" fill="#f3b62a"/><circle cx="12" cy="9.500" r="1.600" fill="#3aa0e8"/><circle cx="7" cy="16" r="1.600" fill="#46b860"/><path d="M12,15 L20,2 L21.500,3 L14,16Z" fill="#c9923a"/><path d="M12,15 L14,16 L11.500,18Z" fill="#555"/></svg>
<!-- underlines -->
<div class="abs" style="left:127px;top:898px;width:33px;height:2px;background:#8ab4e8"></div>
<div class="abs" style="left:205px;top:898px;width:40px;height:2px;background:#9cc2f0"></div>
<div class="abs" style="left:249px;top:898px;width:33px;height:2px;background:#8ab4e8"></div>
<!-- tray -->
<svg class="abs" style="left:1415px;top:879px" width="11" height="8" viewBox="0 0 11 8"><path d="M0.800,6.500 L5.500,1.500 L10.200,6.500" fill="none" stroke="#fff" stroke-width="1.200"/></svg>
<svg class="abs" style="left:1434px;top:877px" width="15" height="13" viewBox="0 0 15 13"><path d="M3,1.500 H14 V9 H3Z" fill="none" stroke="#fff" stroke-width="1.100"/><path d="M0.500,0.500 V5 H3 M6,11.500 H11 M8.500,9 V11.500" fill="none" stroke="#fff" stroke-width="1.100"/></svg>
<svg class="abs" style="left:1453px;top:877px" width="16" height="13" viewBox="0 0 16 13"><path d="M1,4.500 H3.500 L7,1.500 V11.500 L3.500,8.500 H1Z" fill="none" stroke="#fff" stroke-width="1.100" stroke-linejoin="round"/><path d="M9.500,4.500 A3,3 0 0 1 9.500,8.500 M11.500,2.800 A5.500,5.500 0 0 1 11.500,10.200 M13.500,1.200 A8,8 0 0 1 13.500,11.800" fill="none" stroke="#fff" stroke-width="1"/></svg>
<div class="t" style="left:1476px;top:877px;font-size:10.500px;color:#fff;letter-spacing:-.2px">РУС</div>
<div class="t" style="left:1505px;width:46px;text-align:center;top:870px;font-size:9.9px;color:#fff;letter-spacing:-.2px">14:33</div>
<div class="t" style="left:1500px;width:56px;text-align:center;top:884px;font-size:9.9px;color:#fff;letter-spacing:-.3px">27.09.2024</div>
<svg class="abs" style="left:1565px;top:876px" width="20" height="19" viewBox="0 0 18 17"><path d="M1,1 H14 V10.500 H6 L3,13.500 V10.500 H1Z" fill="#fff"/><path d="M3,3.500 H12 M3,5.800 H12 M3,8 H9" stroke="#1d202b" stroke-width=".9"/><circle cx="12.500" cy="11.500" r="4.500" fill="#1d202b" stroke="#fff" stroke-width="1"/><text x="12.500" y="14.300" font-family="Liberation Sans, sans-serif" font-size="7.500" text-anchor="middle" fill="#fff">1</text></svg>
<div class="abs" style="left:1596px;top:867px;width:1px;height:33px;background:#6a6d76"></div>
<!--TASKBAR-ITEMS_E-->
</body></html>
